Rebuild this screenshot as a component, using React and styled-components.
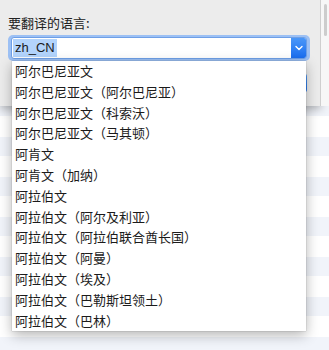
import React from "react";
import styled, { createGlobalStyle } from "styled-components";

const GlobalStyle = createGlobalStyle`
  html, body {
    margin: 0;
    padding: 0;
  }
  body {
    font-family: "Noto Sans CJK SC", "Liberation Sans", sans-serif;
    background: #ffffff;
    color: #1b1b1b;
  }
`;

const Page = styled.div`
  position: relative;
  width: 329px;
  height: 350px;
  overflow: hidden;
  display: flex;
  align-items: flex-start;
  background: repeating-linear-gradient(
    to bottom,
    #ffffff 0px,
    #ffffff 17px,
    #f1f4fa 17px,
    #f1f4fa 36px,
    #ffffff 36px,
    #ffffff 40px
  );
`;

const Sheet = styled.div`
  width: 321px;
  height: 106px;
  box-sizing: border-box;
  padding: 15px 12px 0 8px;
  background: #ececec;
  border-right: 1px solid #cfcfcf;
  box-shadow: 0 3px 9px rgba(0, 0, 0, 0.28);
  display: flex;
  flex-direction: column;
`;

const Label = styled.div`
  font-size: 13px;
  line-height: 16px;
  height: 16px;
  color: #222;
`;

const SelectRing = styled.div`
  margin-top: 4px;
  width: 302px;
  height: 26px;
  box-sizing: border-box;
  padding: 2px 3px;
  border-radius: 5px;
  background: #9cc0f4;
  display: flex;
`;

const SelectBox = styled.div`
  flex: 1;
  display: flex;
  align-items: stretch;
  background: #ffffff;
  border: 1px solid #6e9fe6;
  border-radius: 3px;
  overflow: hidden;
`;

const Value = styled.div`
  flex: 1;
  display: flex;
  align-items: center;
  padding-left: 1px;
  font-family: "Liberation Sans", Arial, sans-serif;
  font-size: 13px;
`;

const Selected = styled.span`
  background: #b3d4fc;
  padding: 1px 2px;
  line-height: 16px;
`;

const Arrow = styled.div`
  width: 15px;
  display: flex;
  align-items: center;
  justify-content: center;
  background: linear-gradient(to bottom, #4a97f8, #1a6ef0);
`;

const ButtonRow = styled.div`
  margin-top: 12px;
  display: flex;
  justify-content: flex-end;
  padding-right: 1px;
`;

const BlueButton = styled.div`
  width: 60px;
  height: 20px;
  border-radius: 4px;
  background: linear-gradient(to bottom, #5aa2fa, #1d72f0);
`;

const Backdrop = styled.div`
  flex: 1;
  height: 106px;
  background: #f7f7f7;
  display: flex;
  justify-content: center;
  padding-top: 4px;
  box-sizing: border-box;
`;

const Thumb = styled.div`
  width: 3px;
  height: 32px;
  border-radius: 2px;
  background: #cdcdcd;
`;

const List = styled.ul`
  position: absolute;
  left: 12px;
  top: 61px;
  width: 294px;
  margin: 0;
  padding: 0;
  list-style: none;
  background: #ffffff;
  box-shadow: 0 4px 12px rgba(0, 0, 0, 0.3), 0 0 1px rgba(0, 0, 0, 0.35);
`;

const Item = styled.li`
  height: 20.8px;
  line-height: 20.8px;
  padding-left: 3px;
  font-size: 13px;
  color: #1b1b1b;
  white-space: nowrap;
`;

const languages = [
  "阿尔巴尼亚文",
  "阿尔巴尼亚文（阿尔巴尼亚）",
  "阿尔巴尼亚文（科索沃）",
  "阿尔巴尼亚文（马其顿）",
  "阿肯文",
  "阿肯文（加纳）",
  "阿拉伯文",
  "阿拉伯文（阿尔及利亚）",
  "阿拉伯文（阿拉伯联合酋长国）",
  "阿拉伯文（阿曼）",
  "阿拉伯文（埃及）",
  "阿拉伯文（巴勒斯坦领土）",
  "阿拉伯文（巴林）",
];

const App = () => {
  return (
    <Page>
      <GlobalStyle />
      <Sheet>
        <Label>要翻译的语言:</Label>
        <SelectRing>
          <SelectBox>
            <Value>
              <Selected>zh_CN</Selected>
            </Value>
            <Arrow>
              <svg width="8" height="6" viewBox="0 0 8 6">
                <path
                  d="M1 1.5 L4 4.5 L7 1.5"
                  fill="none"
                  stroke="#ffffff"
                  strokeWidth="1.4"
                  strokeLinecap="round"
                  strokeLinejoin="round"
                />
              </svg>
            </Arrow>
          </SelectBox>
        </SelectRing>
        <ButtonRow>
          <BlueButton />
        </ButtonRow>
      </Sheet>
      <Backdrop>
        <Thumb />
      </Backdrop>
      <List>
        {languages.map((name) => (
          <Item key={name}>{name}</Item>
        ))}
      </List>
    </Page>
  );
};

export default App;
